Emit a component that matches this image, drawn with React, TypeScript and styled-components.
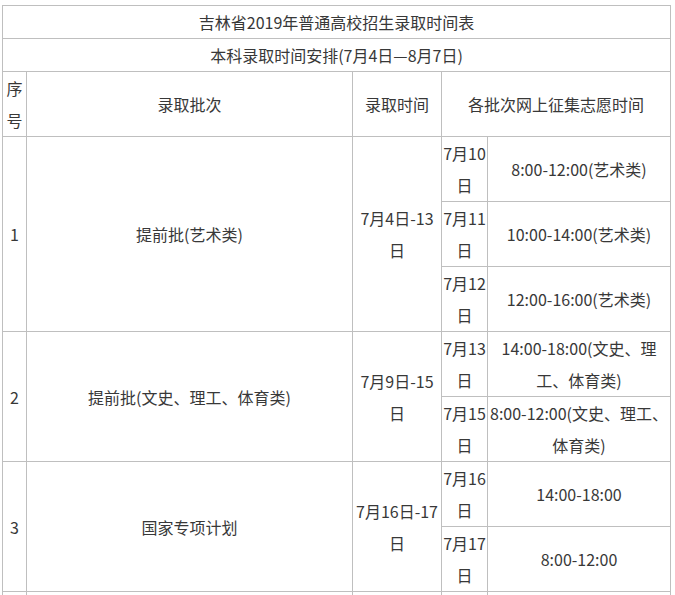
import React from "react";
import styled, { createGlobalStyle } from "styled-components";

const GlobalStyle = createGlobalStyle`
  html, body {
    margin: 0;
    padding: 0;
    background: #fff;
  }
`;

const Page = styled.div`
  padding: 5px 0 0 2px;
  font-family: "Noto Sans CJK SC", "Microsoft YaHei", sans-serif;
  font-size: 16px;
  color: #383838;
`;

const Table = styled.table`
  width: 669px;
  table-layout: fixed;
  border-collapse: separate;
  border-spacing: 0;
  border-left: 1px solid #bfbfbf;
  border-top: 1px solid #bfbfbf;
`;

const Cell = styled.td<{ $nowrap?: boolean }>`
  box-sizing: border-box;
  padding: 0;
  border-right: 1px solid #bfbfbf;
  border-bottom: 1px solid #bfbfbf;
  line-height: 32px;
  height: 32px;
  text-align: center;
  vertical-align: middle;
  white-space: ${(p) => (p.$nowrap ? "nowrap" : "normal")};
  word-break: break-all;
`;

type Slot = { day: string; time: React.ReactNode };
type Batch = { no: string; name: string; period: React.ReactNode; slots: Slot[] };

const batches: Batch[] = [
  {
    no: "1",
    name: "提前批(艺术类)",
    period: (
      <>
        7月4日-13
        <br />日
      </>
    ),
    slots: [
      { day: "7月10", time: "8:00-12:00(艺术类)" },
      { day: "7月11", time: "10:00-14:00(艺术类)" },
      { day: "7月12", time: "12:00-16:00(艺术类)" },
    ],
  },
  {
    no: "2",
    name: "提前批(文史、理工、体育类)",
    period: (
      <>
        7月9日-15
        <br />日
      </>
    ),
    slots: [
      {
        day: "7月13",
        time: (
          <>
            14:00-18:00(文史、理
            <br />
            工、体育类)
          </>
        ),
      },
      {
        day: "7月15",
        time: (
          <>
            8:00-12:00(文史、理工、
            <br />
            体育类)
          </>
        ),
      },
    ],
  },
  {
    no: "3",
    name: "国家专项计划",
    period: (
      <>
        7月16日-17
        <br />日
      </>
    ),
    slots: [
      { day: "7月16", time: "14:00-18:00" },
      { day: "7月17", time: "8:00-12:00" },
    ],
  },
];

export default function App() {
  return (
    <>
      <GlobalStyle />
      <Page>
        <Table>
          <colgroup>
            <col style={{ width: 24 }} />
            <col style={{ width: 326 }} />
            <col style={{ width: 89 }} />
            <col style={{ width: 46 }} />
            <col style={{ width: 183 }} />
          </colgroup>
          <tbody>
            <tr>
              <Cell colSpan={5}>吉林省2019年普通高校招生录取时间表</Cell>
            </tr>
            <tr>
              <Cell colSpan={5}>本科录取时间安排(7月4日—8月7日)</Cell>
            </tr>
            <tr>
              <Cell>序号</Cell>
              <Cell>录取批次</Cell>
              <Cell>录取时间</Cell>
              <Cell colSpan={2}>各批次网上征集志愿时间</Cell>
            </tr>
            {batches.map((b) =>
              b.slots.map((s, i) => (
                <tr key={b.no + s.day}>
                  {i === 0 && (
                    <>
                      <Cell rowSpan={b.slots.length}>{b.no}</Cell>
                      <Cell rowSpan={b.slots.length}>{b.name}</Cell>
                      <Cell rowSpan={b.slots.length} $nowrap>
                        {b.period}
                      </Cell>
                    </>
                  )}
                  <Cell $nowrap>
                    {s.day}
                    <br />日
                  </Cell>
                  <Cell $nowrap>{s.time}</Cell>
                </tr>
              ))
            )}
            <tr>
              <Cell />
              <Cell />
              <Cell />
              <Cell />
              <Cell />
            </tr>
          </tbody>
        </Table>
      </Page>
    </>
  );
}
